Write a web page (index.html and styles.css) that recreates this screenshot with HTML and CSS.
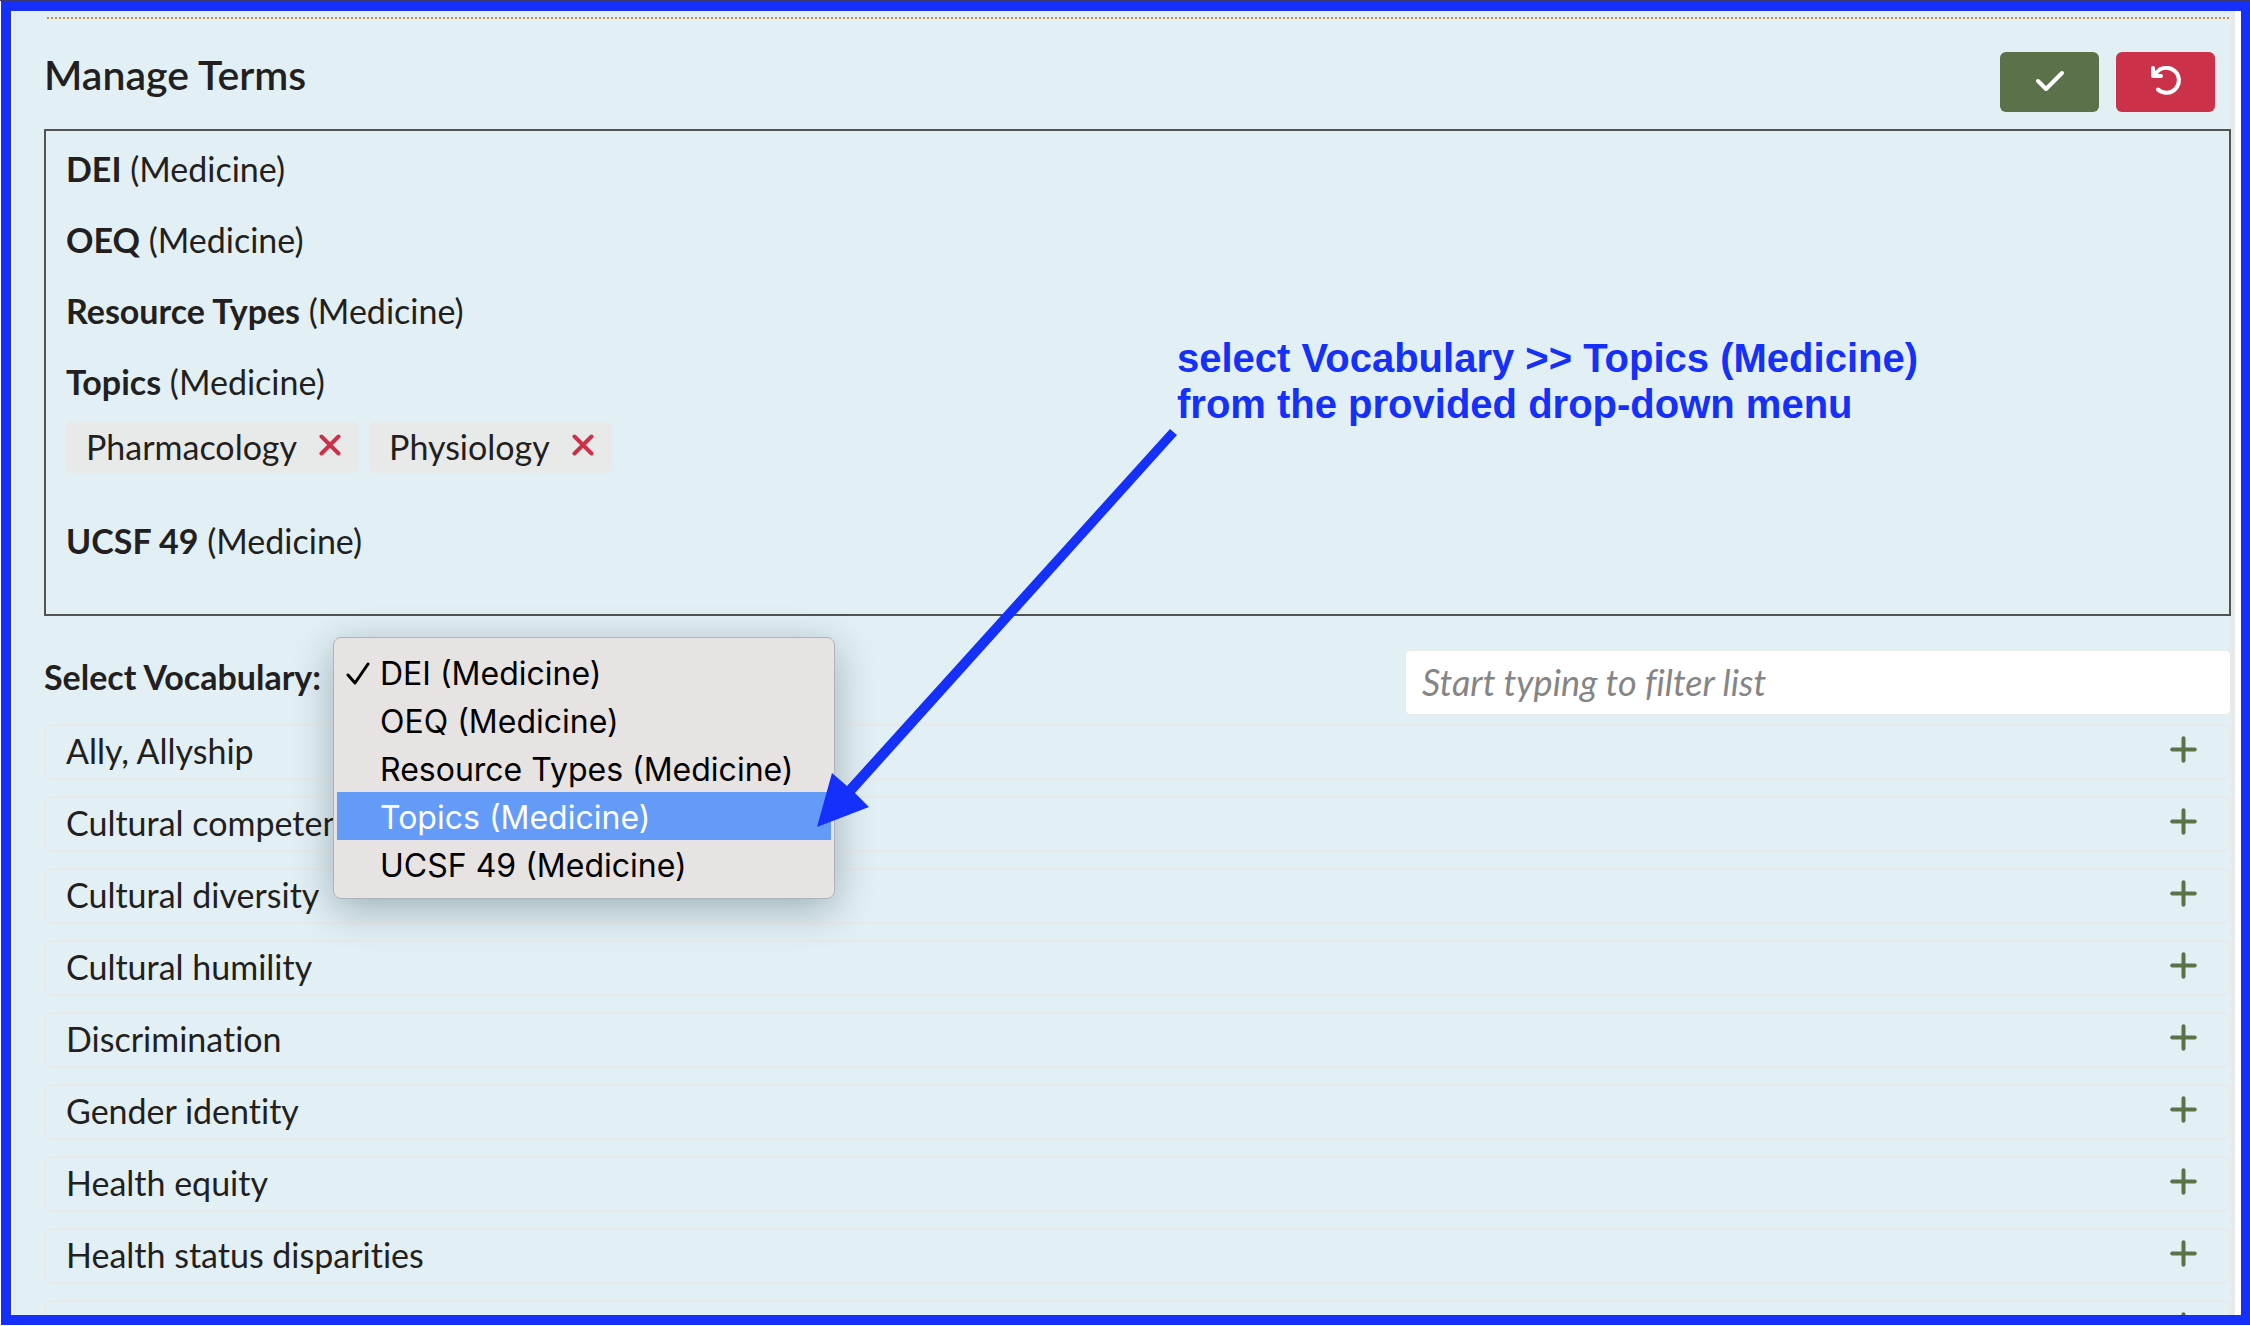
FILE: index.html
```html
<!DOCTYPE html>
<html lang="en">
<head>
<meta charset="utf-8">
<title>Manage Terms</title>
<link rel="stylesheet" href="styles.css">
</head>
<body>
<svg class="sprite" aria-hidden="true">
  <symbol id="plus" viewBox="0 0 27 27"><path d="M13.5 2.2v22.6M2.2 13.5h22.6"/></symbol>
  <symbol id="cross" viewBox="0 0 22 22"><path d="M2.5 2.5l17 17M19.5 2.5l-17 17"/></symbol>
</svg>
<div class="frame">
  <main class="panel">
    <header class="heading">
      <h1>Manage Terms</h1>
      <div class="actions">
        <button class="save" type="button" aria-label="Save"><svg width="30" height="22" viewBox="0 0 30 22"><path d="M3 11l8 8L27 3"/></svg></button>
        <button class="undo" type="button" aria-label="Cancel"><svg width="30" height="30" viewBox="0 0 30 30"><path d="M2 2v8h8M2.500 9.500L6 6A12.500 12.500 0 1 1 7 23.500"/></svg></button>
      </div>
    </header>

    <section class="selected">
      <div class="group"><strong>DEI</strong> (Medicine)</div>
      <div class="group"><strong>OEQ</strong> (Medicine)</div>
      <div class="group"><strong>Resource Types</strong> (Medicine)</div>
      <div class="group"><strong>Topics</strong> (Medicine)</div>
      <ul class="chips">
        <li>Pharmacology <button type="button" aria-label="Remove Pharmacology"><svg width="22" height="22"><use href="#cross"/></svg></button></li>
        <li>Physiology <button type="button" aria-label="Remove Physiology"><svg width="22" height="22"><use href="#cross"/></svg></button></li>
      </ul>
      <div class="group"><strong>UCSF 49</strong> (Medicine)</div>
    </section>

    <div class="toolbar">
      <label for="vocabulary">Select Vocabulary:</label>
      <div class="picker">
        <div class="menu">
          <select id="vocabulary" size="5">
            <option selected>DEI (Medicine)</option>
            <option>OEQ (Medicine)</option>
            <option>Resource Types (Medicine)</option>
            <option class="hovered">Topics (Medicine)</option>
            <option>UCSF 49 (Medicine)</option>
          </select>
          <svg class="tick" width="24" height="24" viewBox="0 0 24 24" aria-hidden="true"><path d="M2 13l7 8L22 2"/></svg>
        </div>
      </div>
      <input type="text" aria-label="Filter list" placeholder="Start typing to filter list">
    </div>

    <ul class="terms">
      <li>Ally, Allyship <button type="button" aria-label="Add"><svg width="27" height="27"><use href="#plus"/></svg></button></li>
      <li>Cultural competence <button type="button" aria-label="Add"><svg width="27" height="27"><use href="#plus"/></svg></button></li>
      <li>Cultural diversity <button type="button" aria-label="Add"><svg width="27" height="27"><use href="#plus"/></svg></button></li>
      <li>Cultural humility <button type="button" aria-label="Add"><svg width="27" height="27"><use href="#plus"/></svg></button></li>
      <li>Discrimination <button type="button" aria-label="Add"><svg width="27" height="27"><use href="#plus"/></svg></button></li>
      <li>Gender identity <button type="button" aria-label="Add"><svg width="27" height="27"><use href="#plus"/></svg></button></li>
      <li>Health equity <button type="button" aria-label="Add"><svg width="27" height="27"><use href="#plus"/></svg></button></li>
      <li>Health status disparities <button type="button" aria-label="Add"><svg width="27" height="27"><use href="#plus"/></svg></button></li>
      <li><button type="button" aria-label="Add"><svg width="27" height="27"><use href="#plus"/></svg></button></li>
    </ul>
  </main>
</div>
<p class="note">select Vocabulary &gt;&gt; Topics (Medicine)<br>from the provided drop-down menu</p>
<svg class="arrow" width="360" height="398" viewBox="0 0 360 398" aria-hidden="true"><path d="M353 0l7 6L38 364l14 14L0 398l15-54 15 13z"/></svg>
</body>
</html>
```

FILE: styles.css
```css
:root {
  --blue: #1430fa;
  --sky: #e2eff5;
  --line: #e8eaea;
  --green: #5a714a;
  --red: #cb3249;
}

* { box-sizing: border-box; }

body {
  margin: 0;
  position: relative;
  height: 100vh;
  overflow: hidden;
  padding: 0 0 1px 1px;
  border-top: 1px solid #3a3a70;
  background: #fff;
  color: #231f20;
  font: 34px/48px Lato, "Noto Sans", sans-serif;
  font-variant-ligatures: none;
}

h1, ul, p { margin: 0; padding: 0; }
ul { list-style: none; }

button {
  display: flex;
  align-items: center;
  justify-content: center;
  padding: 0;
  border: 0;
  background: none;
  color: inherit;
}

svg {
  fill: none;
  stroke: currentColor;
  stroke-width: 4;
  stroke-linecap: round;
  stroke-linejoin: round;
}

.sprite { position: absolute; width: 0; height: 0; }

.frame {
  height: 100%;
  overflow: hidden;
  padding: 0 6px 0 2px;
  border: 10px solid var(--blue);
  border-right-width: 9px;
}

.panel {
  padding: 6px 0 0 28px;
  border: solid var(--line);
  border-width: 0 4px 0 3px;
  background: var(--sky);
}

.heading {
  display: flex;
  justify-content: space-between;
  margin: 0 2px 0 3px;
  padding: 33px 14px 17px 0;
  border-top: 2px dotted #c78c40;
}

h1 {
  margin-left: -3px;
  font-size: 41px;
  line-height: 46px;
  font-weight: 600;
}

.actions { display: flex; gap: 17px; }
.actions button { width: 99px; height: 60px; border-radius: 6px; color: #fff; }
.actions .save { background: var(--green); padding-bottom: 3px; }
.actions .undo { background: var(--red); padding-bottom: 3px; }

.selected {
  padding: 14px 20px 26px;
  border: 2px solid #545354;
}

.group { margin-bottom: 23px; }

.chips { display: flex; gap: 10px; margin: -8px 0 44px; }
.chips li {
  display: flex;
  gap: 22px;
  padding: 2px 18px 2px 20px;
  border-radius: 6px;
  background: var(--line);
}
.chips button { color: var(--red); padding-bottom: 4px; }

.toolbar { display: flex; margin: 34px 0 9px; }
.toolbar label { padding-top: 3px; font-weight: 700; }

.picker { position: relative; flex: 1; margin-left: 12px; }

.menu {
  position: absolute;
  z-index: 1;
  top: -13px;
  left: 0;
  width: 502px;
  padding: 10px 3px;
  border: 1px solid #aab4b9;
  border-radius: 8px;
  background: #e7e3e2;
  box-shadow: 0 10px 40px rgba(0, 30, 40, .3);
}

select {
  display: block;
  width: 100%;
  height: 240px;
  overflow: hidden;
  padding: 0;
  border: 0;
  outline: 0;
  background: none;
  color: #000;
  font: 32px/48px Inter, sans-serif;
  scrollbar-width: none;
}
option { height: 48px; min-height: 48px; padding: 6px 0 0 43px; }
option:checked { background: linear-gradient(#e7e3e2, #e7e3e2); color: #000; }
option.hovered { background: #649af8; color: #fff; }

.tick { position: absolute; top: 24px; left: 12px; color: #000; stroke-width: 3; }

input {
  width: 826px;
  height: 65px;
  padding: 0 16px 2px;
  border: 1px solid var(--line);
  border-radius: 5px;
  background: #fff;
  font: inherit;
  font-size: 36px;
}
input::placeholder { color: #858585; opacity: 1; font-style: italic; }

.terms { display: grid; gap: 16px; }
.terms li {
  display: flex;
  align-items: center;
  justify-content: space-between;
  height: 56px;
  padding: 0 32px 2px 20px;
  border: 2px solid var(--line);
  border-radius: 8px;
}
.terms button { margin-left: auto; padding-bottom: 3px; color: var(--green); }

.note {
  position: absolute;
  top: 334px;
  left: 1177px;
  color: var(--blue);
  font: bold 40px/46px "Liberation Sans", sans-serif;
}

.arrow {
  position: absolute;
  z-index: 2;
  top: 428px;
  left: 817px;
  fill: var(--blue);
  stroke: none;
}
```
